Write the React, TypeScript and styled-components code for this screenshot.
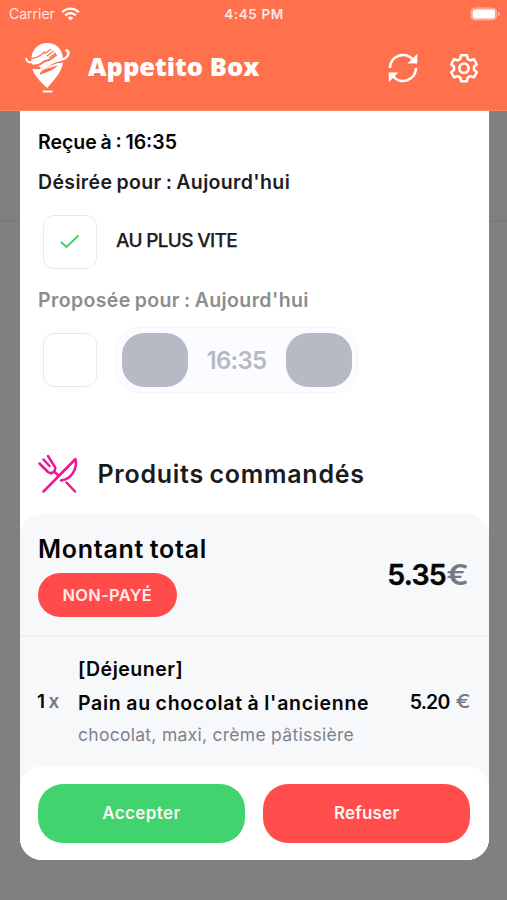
import React from "react";
import styled, { createGlobalStyle } from "styled-components";

const GlobalStyle = createGlobalStyle`
  * { box-sizing: border-box; }
  body { margin: 0; background: #808080; font-family: Inter, "Open Sans", sans-serif; }
`;

const Screen = styled.div`
  width: 507px;
  height: 900px;
  display: flex;
  flex-direction: column;
  overflow: hidden;
  background: linear-gradient(#7b7b7b, #7b7b7b) 0 220px / 100% 2px no-repeat #808080;
`;

const Header = styled.header`
  height: 111px;
  flex: none;
  background: #ff704d;
  border-bottom: 1px solid #ff8567;
  color: #fff;
`;

const StatusBar = styled.div`
  height: 28px;
  padding: 0 8px 0 9px;
  display: grid;
  grid-template-columns: 1fr auto 1fr;
  align-items: center;
  font-size: 14px;
`;

const Carrier = styled.div`
  display: flex;
  align-items: center;
  gap: 6px;
  margin-top: -1px;
  color: #ffe6df;
`;

const Clock = styled.div`
  font-weight: 600;
  font-size: 13.5px;
  letter-spacing: 0.6px;
  color: #ffe9e3;
`;

const BatterySlot = styled.div`
  display: flex;
  justify-content: flex-end;
  margin-top: -1px;
  svg { margin-right: -2px; }
`;

const TitleBar = styled.div`
  height: 80px;
  padding: 0 27px 0 24px;
  display: flex;
  align-items: center;
`;

const Brand = styled.h1`
  flex: 1;
  margin: 0 0 4px 17px;
  font: 800 25.5px/36px "Open Sans", sans-serif;
`;

const HeaderActions = styled.div`
  display: flex;
  gap: 29px;
`;

const IconButton = styled.button`
  border: 0;
  padding: 0;
  background: none;
  display: flex;
`;

const Sheet = styled.main`
  width: 469px;
  height: 749px;
  margin-left: 19.5px;
  display: flex;
  flex-direction: column;
  border-radius: 0 0 22px 22px;
  background: #fff;
  overflow: hidden;
`;

const Details = styled.section`
  height: 403px;
  padding: 12px 18.5px 0;
`;

const Line = styled.div<{ $muted?: boolean; $spacing: number; $dark?: boolean }>`
  height: 40px;
  line-height: 39px;
  white-space: pre;
  font-size: 19.5px;
  font-weight: 600;
  letter-spacing: ${(p) => p.$spacing}px;
  word-spacing: -1.2px;
  color: ${(p) => (p.$muted ? "#8d8d8e" : p.$dark ? "#050505" : "#1d1d1f")};
`;

const OptionRow = styled.div`
  height: 78px;
  padding-left: 5px;
  display: flex;
  align-items: center;
`;

const Checkbox = styled.div`
  width: 54px;
  height: 54px;
  margin-right: 19px;
  border: 1.5px solid #e9e9eb;
  border-radius: 11px;
  display: flex;
  align-items: center;
  justify-content: center;
`;

const OptionLabel = styled.span`
  margin-top: -3px;
  font-size: 19px;
  font-weight: 500;
  letter-spacing: -0.66px;
  color: #1d1d1f;
  -webkit-text-stroke: 0.25px #1d1d1f;
`;

const Stepper = styled.div`
  width: 242px;
  height: 66px;
  padding: 0 5px;
  margin-left: -0.5px;
  display: flex;
  align-items: center;
  justify-content: space-between;
  border: 1px solid #f5f7f8;
  border-radius: 22px;
  background: #fafcff;
`;

const StepButton = styled.button`
  width: 66px;
  height: 54px;
  border: 0;
  border-radius: 22px;
  background: #b7bac4;
`;

const StepValue = styled.span`
  font-size: 24px;
  font-weight: 600;
  letter-spacing: -0.7px;
  color: #b7b9c0;
`;

const SectionTitle = styled.h2`
  height: 48px;
  margin: 51px 0 0;
  display: flex;
  align-items: center;
  gap: 18.5px;
  font-size: 25px;
  font-weight: 600;
  letter-spacing: 0.74px;
  word-spacing: -1.5px;
  color: #1b1b1d;
`;

const Order = styled.section`
  flex: 1;
  display: flex;
  flex-direction: column;
  background: #f6f8fa;
  border-radius: 22px 22px 0 0;
`;

const Total = styled.div`
  height: 123px;
  padding: 19px 19px 0 18.5px;
  display: flex;
  justify-content: space-between;
  border-bottom: 2px solid #edeff1;
`;

const TotalLabel = styled.div`
  height: 32px;
  margin-bottom: 8px;
  line-height: 32px;
  font-size: 25px;
  font-weight: 600;
  letter-spacing: 0.74px;
  word-spacing: -1.5px;
  color: #050506;
`;

const Badge = styled.div`
  width: 138.5px;
  height: 44px;
  border-radius: 22px;
  display: flex;
  align-items: center;
  justify-content: center;
  background: #ff4c4b;
  color: #ffeceb;
  font-size: 16.5px;
  font-weight: 600;
  letter-spacing: 0.3px;
`;

const TotalAmount = styled.div`
  height: 84px;
  line-height: 84px;
  display: flex;
  font-size: 28.5px;
  font-weight: 600;
  letter-spacing: -0.75px;
  color: #050506;
  -webkit-text-stroke: 0.4px #050506;
`;

const Currency = styled.span<{ $large?: boolean }>`
  width: ${(p) => (p.$large ? 23.5 : 14)}px;
  display: inline-flex;
  justify-content: center;
  transform: scaleX(1.18);
  color: #757987;
  letter-spacing: 0;
  -webkit-text-stroke: 0;
  font-size: ${(p) => (p.$large ? 28.5 : 19)}px;
  font-weight: ${(p) => (p.$large ? 600 : 500)};
`;

const Item = styled.div`
  flex: 1;
  padding: 14.5px 19px 0 17.5px;
  display: grid;
  grid-template-columns: 41px 1fr auto;
  align-items: start;
`;

const Quantity = styled.div`
  display: flex;
  gap: 3.5px;
  padding-top: 33px;
  line-height: 34px;
  font-size: 19px;
  font-weight: 600;
  color: #050506;
  span { color: #757987; }
`;

const ItemName = styled.div<{ $spacing: number }>`
  height: 34px;
  line-height: 34px;
  white-space: nowrap;
  font-size: 19.5px;
  font-weight: 600;
  letter-spacing: ${(p) => p.$spacing}px;
  word-spacing: -0.8px;
  color: #050506;
`;

const Options = styled.div`
  height: 30px;
  line-height: 30px;
  white-space: nowrap;
  font-size: 17.5px;
  letter-spacing: 0.28px;
  color: #7d838d;
`;

const Price = styled.div`
  display: flex;
  gap: 6px;
  padding-top: 33px;
  line-height: 34px;
  font-size: 19.5px;
  font-weight: 600;
  letter-spacing: -0.8px;
  color: #050506;
`;

const FooterBack = styled.div`
  background: #f6f8fa;
`;

const Footer = styled.footer`
  height: 94px;
  padding: 18px 18.5px;
  display: flex;
  gap: 18.5px;
  border-radius: 22px 22px 0 0;
  background: #fff;
`;

const ActionButton = styled.button<{ $tone: string; $spacing: number }>`
  flex: 1;
  height: 58.5px;
  padding: 0;
  border: 0;
  border-radius: 25px;
  background: ${(p) => p.$tone};
  color: #fff5f3;
  font: 600 17px Inter, sans-serif;
  letter-spacing: ${(p) => p.$spacing}px;
`;

const WifiIcon = () => (
  <svg width="19" height="14" viewBox="0 0 19 14" fill="none" stroke="#fff" strokeWidth="2.3">
    <path d="M1.2 5.2C6 .4 13 .4 17.8 5.2" />
    <path d="M4.2 8.3C7.3 5.3 11.7 5.3 14.8 8.3" />
    <path d="M9.5 13.5L6.7 10.7C8.3 9.2 10.7 9.2 12.3 10.7Z" fill="#fff" stroke="none" />
  </svg>
);

const BatteryIcon = () => (
  <svg width="31" height="14" viewBox="0 0 31 14">
    <rect x="1" y="1" width="25.5" height="12" rx="3.8" fill="#ff9b82" stroke="#ffad98" />
    <rect x="2.7" y="2.5" width="22.3" height="9" rx="2.2" fill="#fff" />
    <path d="M28 5v4q2-.5 2-2t-2-2z" fill="#ffad98" />
  </svg>
);

const Logo = () => (
  <svg width="47" height="54" viewBox="0 0 47 54" fill="none">
    <path d="M7.3 17.5C8 8 14.500 2 23.300 2S38 8 39 16.500L31 20 17.700 26 9 24.500Q7 22 7.300 17.500z" fill="#fff" />
    <path d="M7 24.800c5 .2 9-.8 12.500-3.800 2-1.600 5-1.200 7.500-3l5.500-4.500" stroke="#ff704d" strokeWidth="2" />
    <path d="M6 17.200c4 1 7.500-.8 10.500-3l4.500-3.700" stroke="#ff704d" strokeWidth="1.300" />
    <path d="M21 12.500l5.500-4M23.200 14.700l6-4.400M25.500 16.800l6-4.600" stroke="#ff704d" strokeWidth="1.300" strokeLinecap="round" />
    <path d="M2.300 17.800C2.800 21.500 7 22.200 11.500 20.400" stroke="#fff" strokeWidth="2" strokeLinecap="round" />
    <path d="M42.300 9.500c3.700.8 2.500 5.500-1.500 8-4 2-8 1-13 4.500-3.500 2.300-5.500 4-10.500 4.800" stroke="#fff" strokeWidth="2.400" strokeLinecap="round" />
    <path d="M8.200 27.800C14 29 20 28 26 25q6-3.200 13-3.500c-1 9-8.500 17-15.700 25.500C16.500 41 10.700 35 8.200 27.800z" fill="#fff" />
    <path d="M15.500 34c1-4 4-5.800 8.500-6.800l9.500-2.700c-3 4.300-7.500 5-10.500 6.500z" fill="#ff704d" />
    <path d="M19.500 50.500h8" stroke="#fff" strokeWidth="2" strokeLinecap="round" />
  </svg>
);

const RefreshIcon = () => (
  <svg width="32" height="32" viewBox="0 0 32 32" fill="none" stroke="#fff" strokeWidth="2.7">
    <path d="M3 16a13 13 0 0 1 23.2-8M29 16a13 13 0 0 1-23.2 8" />
    <path d="M30.3 1.8v9.8h-9.8zM1.7 30.2v-9.8h9.8z" fill="#fff" stroke="none" />
  </svg>
);

const GearIcon = () => (
  <svg width="32" height="32" viewBox="0 0 24 24" fill="none" stroke="#fff" strokeWidth="1.9" strokeLinejoin="round">
    <path d="M9.8 2.4h4.4l.6 2.8 1.9 1.1 2.7-.9 2.2 3.8-2.1 1.9v2.2l2.1 1.9-2.2 3.8-2.7-.9-1.9 1.1-.6 2.8H9.8l-.6-2.8-1.9-1.1-2.7.9-2.2-3.8 2.1-1.9v-2.2L2.4 9.2l2.2-3.8 2.7.9 1.9-1.1z" />
    <circle cx="12" cy="12.2" r="3.5" />
  </svg>
);

const CheckIcon = () => (
  <svg width="20" height="16" viewBox="0 0 20 16" fill="none" stroke="#42cc6b" strokeWidth="2">
    <path d="M1 8l5.500 5L18.500 1.500" />
  </svg>
);

const CutleryIcon = () => (
  <svg width="41" height="40" viewBox="0 0 41 40" fill="none" stroke="#ee1596" strokeWidth="2.5" strokeLinecap="round" strokeLinejoin="round">
    <path d="M5.500 37.500L37.500 5C39.500 14 34 25 23 26.500" />
    <path d="M28.500 28.500l8.500 9" />
    <path d="M1.500 9.500l8.500 8.500q3.500 2.500 6-.5t0-6L10 2M5.500 5.500l6 6.500M16 17.500l4.500 4" />
  </svg>
);

export default function App() {
  return (
    <Screen>
      <GlobalStyle />
      <Header>
        <StatusBar>
          <Carrier>Carrier <WifiIcon /></Carrier>
          <Clock>4:45 PM</Clock>
          <BatterySlot><BatteryIcon /></BatterySlot>
        </StatusBar>
        <TitleBar>
          <Logo />
          <Brand>Appetito Box</Brand>
          <HeaderActions>
            <IconButton aria-label="Actualiser"><RefreshIcon /></IconButton>
            <IconButton aria-label="Réglages"><GearIcon /></IconButton>
          </HeaderActions>
        </TitleBar>
      </Header>
      <Sheet>
        <Details>
          <Line $dark $spacing={0}>Reçue à : 16:35</Line>
          <Line $spacing={0.36}>Désirée pour : Aujourd'hui</Line>
          <OptionRow>
            <Checkbox><CheckIcon /></Checkbox>
            <OptionLabel>AU PLUS VITE</OptionLabel>
          </OptionRow>
          <Line $muted $spacing={0.38}>Proposée pour : Aujourd'hui</Line>
          <OptionRow>
            <Checkbox />
            <Stepper>
              <StepButton aria-label="Moins" />
              <StepValue>16:35</StepValue>
              <StepButton aria-label="Plus" />
            </Stepper>
          </OptionRow>
          <SectionTitle><CutleryIcon />Produits commandés</SectionTitle>
        </Details>
        <Order>
          <Total>
            <div>
              <TotalLabel>Montant total</TotalLabel>
              <Badge>NON-PAYÉ</Badge>
            </div>
            <TotalAmount>5.35<Currency $large>€</Currency></TotalAmount>
          </Total>
          <Item>
            <Quantity>1<span>x</span></Quantity>
            <div>
              <ItemName $spacing={0.5}>[Déjeuner]</ItemName>
              <ItemName $spacing={0.7}>Pain au chocolat à l'ancienne</ItemName>
              <Options>chocolat, maxi, crème pâtissière</Options>
            </div>
            <Price>5.20<Currency>€</Currency></Price>
          </Item>
        </Order>
        <FooterBack>
          <Footer>
            <ActionButton $tone="#41d36d" $spacing={0.4}>Accepter</ActionButton>
            <ActionButton $tone="#ff4d4b" $spacing={0.2}>Refuser</ActionButton>
          </Footer>
        </FooterBack>
      </Sheet>
    </Screen>
  );
}
